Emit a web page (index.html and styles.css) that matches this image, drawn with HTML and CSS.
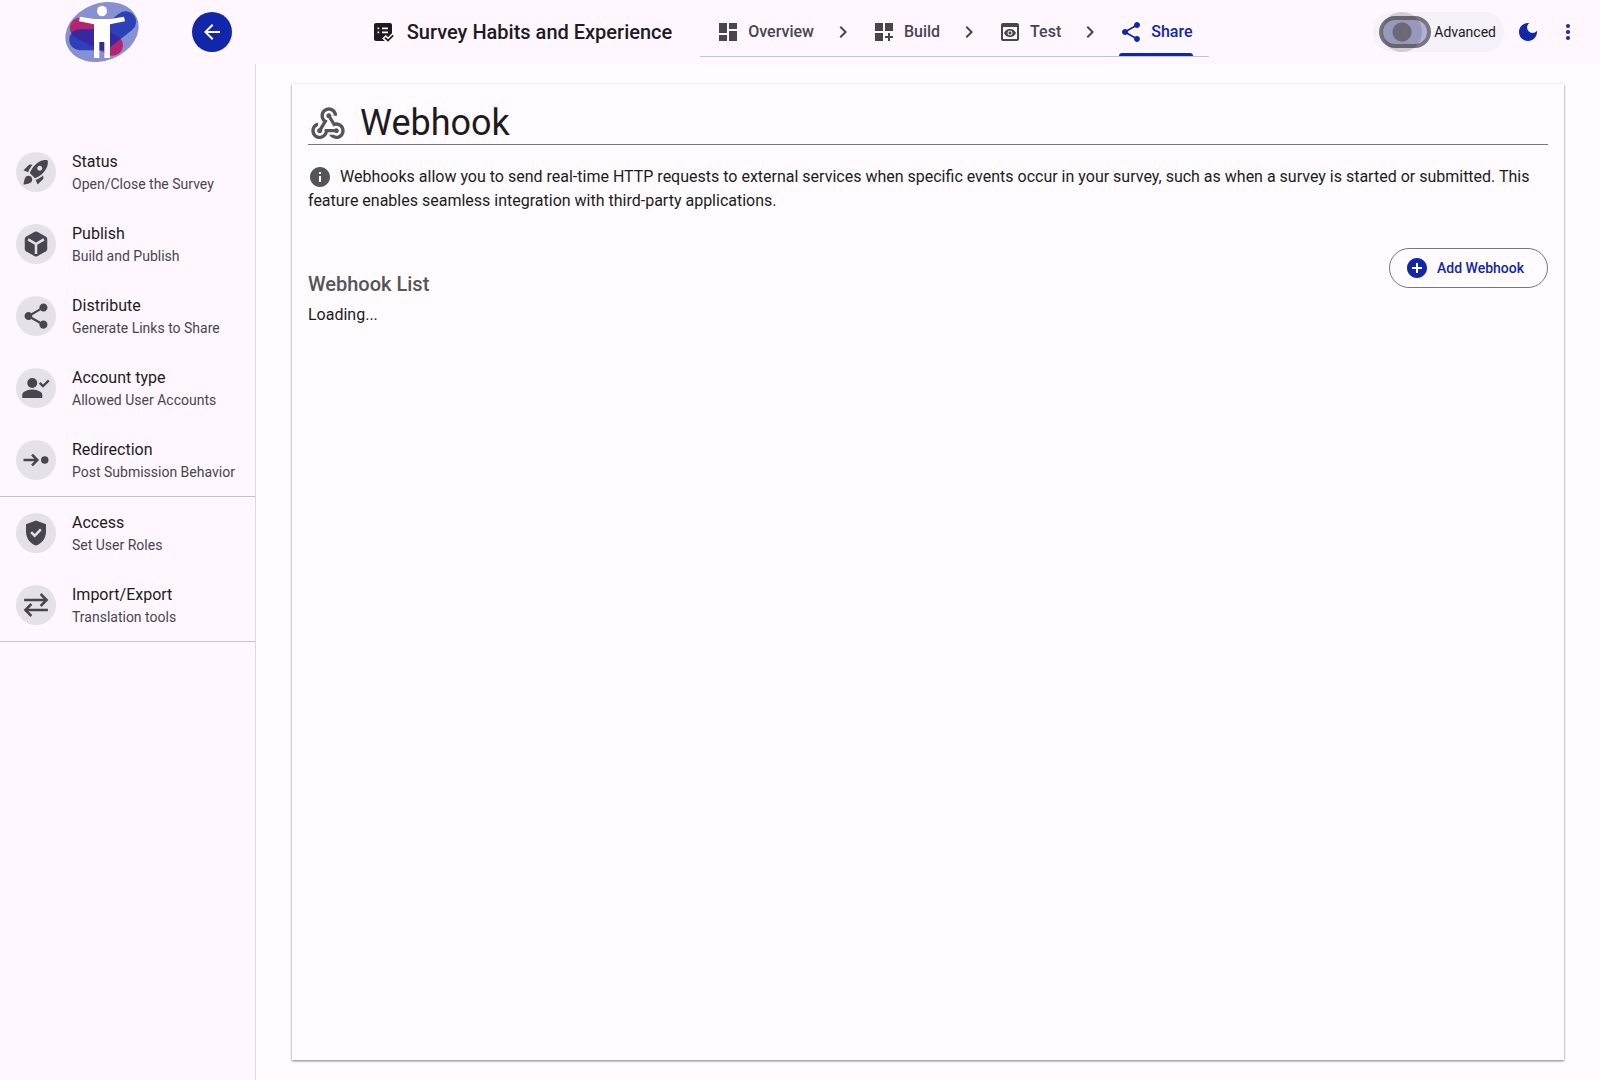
FILE: index.html
```html
<!DOCTYPE html>
<html lang="en">
<head>
    <meta charset="UTF-8">
    <meta name="viewport" content="width=device-width, initial-scale=1.0">
    <link rel="stylesheet" href="styles.css">
    <title>Webhook</title>
</head>
<body>
    <header class="topbar">
        <div class="brand">
            <svg class="logo" viewBox="42 0 228 192" aria-hidden="true">
                <ellipse cx="156" cy="96" rx="113" ry="86" fill="#8890d4" transform="rotate(-21 156 96)"/>
                <path d="M90 84 188 136" stroke="#b5246c" stroke-width="62" stroke-linecap="round"/>
                <path d="M89 119H158L227 65" fill="none" stroke="#1229b0" stroke-opacity=".78" stroke-width="63" stroke-linecap="round" stroke-linejoin="round"/>
                <ellipse cx="156" cy="33" rx="15" ry="16" fill="#fff"/>
                <path d="M90 50 133 57H180L222 50 225 64 180 73V174H163V126H148V174H132V73L87 64z" fill="#fff"/>
            </svg>
            <button class="back" aria-label="Back">
                <svg class="icon" viewBox="0 0 24 24"><path d="M20 11H7.83l5.59-5.59L12 4l-8 8 8 8 1.41-1.41L7.83 13H20v-2z"/></svg>
            </button>
        </div>

        <div class="survey">
            <svg class="icon" viewBox="0 0 24 24" aria-hidden="true">
                <path d="M5 3h14c1.1 0 2 .9 2 2v8.200l-4 4-2.300-2.200-3.500 3.400 2.600 2.600H5c-1.100 0-2-.9-2-2V5c0-1.100.9-2 2-2zm1.500 4.500v1.700h1.700V7.500zm4.500 0v1.700h6V7.500zm-4.500 4v1.700h1.700v-1.700zm4.500 0v1.700h6v-1.700z"/>
                <path d="M14 17.600l3 3 5.200-5.300" fill="none" stroke="currentColor" stroke-width="1.700"/>
            </svg>
            <h1 class="survey-name">Survey Habits and Experience</h1>
            <nav class="tabs">
                <a class="tab" href="#overview">
                    <svg class="icon" viewBox="0 0 24 24"><path d="M3 13h8V3H3v10zm0 8h8v-6H3v6zm10 0h8V11h-8v10zm0-18v6h8V3h-8z"/></svg>
                    Overview
                </a>
                <svg class="icon" viewBox="0 0 24 24"><path d="M10 6 8.590 7.410 13.170 12l-4.580 4.590L10 18l6-6z"/></svg>
                <a class="tab" href="#build">
                    <svg class="icon" viewBox="0 0 24 24"><path d="M3 3h8v8H3zm10 0h8v8h-8zM3 13h8v8H3zm15 0h-2v3h-3v2h3v3h2v-3h3v-2h-3z"/></svg>
                    Build
                </a>
                <svg class="icon" viewBox="0 0 24 24"><path d="M10 6 8.590 7.410 13.170 12l-4.580 4.590L10 18l6-6z"/></svg>
                <a class="tab" href="#test">
                    <svg class="icon" viewBox="0 0 24 24"><path d="M19 3H5c-1.110 0-2 .9-2 2v14c0 1.100.89 2 2 2h14c1.100 0 2-.9 2-2V5c0-1.100-.89-2-2-2zm0 16H5V7h14v12zm-5.500-6c0 .83-.67 1.500-1.500 1.500s-1.500-.67-1.500-1.500.67-1.500 1.500-1.500 1.500.67 1.500 1.500zM12 9c-2.730 0-5.060 1.660-6 4 .94 2.340 3.270 4 6 4s5.060-1.660 6-4c-.94-2.340-3.270-4-6-4zm0 6.500c-1.380 0-2.500-1.120-2.500-2.500s1.120-2.500 2.500-2.500 2.500 1.120 2.500 2.500-1.120 2.500-2.500 2.500z"/></svg>
                    Test
                </a>
                <svg class="icon" viewBox="0 0 24 24"><path d="M10 6 8.590 7.410 13.170 12l-4.580 4.590L10 18l6-6z"/></svg>
                <a class="tab active" href="#share" aria-current="page">
                    <svg class="icon" viewBox="0 0 24 24"><path d="M18 16.080c-.76 0-1.440.3-1.960.77L8.910 12.700c.05-.23.09-.46.09-.7s-.04-.47-.09-.7l7.050-4.110c.54.5 1.250.81 2.040.81 1.660 0 3-1.340 3-3s-1.340-3-3-3-3 1.340-3 3c0 .24.04.47.09.7L8.040 9.810C7.500 9.310 6.790 9 6 9c-1.660 0-3 1.340-3 3s1.340 3 3 3c.79 0 1.500-.31 2.040-.81l7.120 4.160c-.05.21-.08.43-.08.65 0 1.610 1.310 2.920 2.920 2.920s2.920-1.310 2.920-2.920-1.310-2.920-2.920-2.920z"/></svg>
                    Share
                </a>
            </nav>
        </div>

        <div class="tools">
            <label class="advanced">
                <span class="switch"><input type="checkbox" class="switch-input"></span>
                Advanced
            </label>
            <button class="icon-btn" aria-label="Dark mode">
                <svg class="icon" viewBox="0 0 24 24"><path d="M12 3c-4.970 0-9 4.030-9 9s4.030 9 9 9 9-4.030 9-9c0-.46-.04-.92-.1-1.360-.98 1.370-2.580 2.260-4.400 2.260-2.980 0-5.400-2.420-5.400-5.400 0-1.810.89-3.420 2.260-4.400C12.920 3.040 12.460 3 12 3z"/></svg>
            </button>
            <button class="icon-btn" aria-label="More">
                <svg class="icon" viewBox="0 0 24 24"><circle cx="12" cy="6" r="2"/><circle cx="12" cy="12" r="2"/><circle cx="12" cy="18" r="2"/></svg>
            </button>
        </div>
    </header>

    <div class="layout">
        <nav class="sidebar">
            <a class="item" href="#status">
                <span class="avatar"><svg viewBox="0 0 24 24"><path d="M9.190 6.350c-2.040 2.290-3.440 5.580-3.570 5.890L2 10.690l4.050-4.050c.47-.47 1.150-.68 1.810-.55l1.330.26zM11.170 17s3.740-1.550 5.890-3.700c5.400-5.400 4.500-9.620 4.210-10.570-.95-.3-5.170-1.190-10.570 4.210C8.550 9.090 7 12.830 7 12.830L11.170 17zm6.480-2.190c-2.290 2.040-5.580 3.440-5.890 3.570L13.310 22l4.050-4.050c.47-.47.68-1.150.55-1.810l-.26-1.330zM9 18c0 .83-.34 1.580-.88 2.120C6.940 21.300 2 22 2 22s.7-4.940 1.880-6.120C4.420 15.340 5.170 15 6 15c1.660 0 3 1.340 3 3zm4-9c0-1.100.9-2 2-2s2 .9 2 2-.9 2-2 2-2-.9-2-2z"/></svg></span>
                <span class="item-text"><span class="item-title">Status</span><span class="item-sub">Open/Close the Survey</span></span>
            </a>
            <a class="item" href="#publish">
                <span class="avatar"><svg viewBox="0 0 24 24"><path d="M11 2.200q1-.55 2 0l7 4q1 .6 1 1.800v8q0 1.200-1 1.800l-7 4q-1 .55-2 0l-7-4q-1-.6-1-1.800V8q0-1.200 1-1.800z"/><path class="cut" d="M5.700 8.300 12 12l6.300-3.700M12 12v8"/></svg></span>
                <span class="item-text"><span class="item-title">Publish</span><span class="item-sub">Build and Publish</span></span>
            </a>
            <a class="item" href="#distribute">
                <span class="avatar"><svg viewBox="0 0 24 24"><path d="M18 15.500c-.9 0-1.700.4-2.300 1L8.910 12.700c.05-.23.09-.46.09-.7s-.04-.47-.09-.7l6.700-3.900c.6.500 1.400 1 2.390 1 1.900 0 3.200-1.500 3.200-3.200s-1.400-3.300-3.200-3.300-3.300 1.500-3.300 3.300c0 .3.100.500.100.700L8.200 9.700C7.600 9.100 6.900 8.800 6 8.800c-1.800 0-3.200 1.400-3.200 3.200s1.400 3.200 3.200 3.200c.9 0 1.600-.3 2.200-.9l6.600 3.900c-.1.2-.1.500-.1.700 0 1.800 1.500 3.200 3.300 3.200s3.200-1.500 3.200-3.300-1.400-3.300-3.200-3.300z"/></svg></span>
                <span class="item-text"><span class="item-title">Distribute</span><span class="item-sub">Generate Links to Share</span></span>
            </a>
            <a class="item" href="#account">
                <span class="avatar"><svg viewBox="0 0 24 24"><circle cx="9" cy="8" r="4"/><path d="M1 20v-2.800q0-1.600 1.500-2.300Q5.500 13.200 9 13.200t6.500 1.700Q17 15.600 17 17.200V20zM17.600 11.800 14.300 8.500l1.300-1.300 2 2 4-4L22.900 6.500z"/></svg></span>
                <span class="item-text"><span class="item-title">Account type</span><span class="item-sub">Allowed User Accounts</span></span>
            </a>
            <a class="item" href="#redirection">
                <span class="avatar"><svg viewBox="0 0 24 24"><circle cx="19" cy="12" r="3"/><path d="M9.500 17 8.100 15.600 10.700 13H2v-2h8.700L8.100 8.400 9.500 7l5 5z"/></svg></span>
                <span class="item-text"><span class="item-title">Redirection</span><span class="item-sub">Post Submission Behavior</span></span>
            </a>
            <hr class="divider">
            <a class="item" href="#access">
                <span class="avatar"><svg viewBox="0 0 24 24"><path d="M12 2 4 5v6.090c0 5.050 3.410 9.760 8 10.910 4.590-1.150 8-5.860 8-10.910V5l-8-3zm-1.060 13.540L7.400 12l1.410-1.410 2.120 2.120 4.240-4.240 1.410 1.410-5.640 5.660z"/></svg></span>
                <span class="item-text"><span class="item-title">Access</span><span class="item-sub">Set User Roles</span></span>
            </a>
            <a class="item" href="#transfer">
                <span class="avatar"><svg viewBox="0 0 24 24"><path fill="none" stroke="currentColor" stroke-width="2" d="M2.500 8h17.500M15.700 3.200 20.500 8l-4.800 4.800M21.500 16H4M8.300 11.200 3.500 16l4.800 4.800"/></svg></span>
                <span class="item-text"><span class="item-title">Import/Export</span><span class="item-sub">Translation tools</span></span>
            </a>
            <hr class="divider">
        </nav>

        <main class="card">
            <div class="page-title">
                <svg class="webhook-icon" viewBox="0 0 24 24" aria-hidden="true"><path d="M10 15h5.880c.27-.31.67-.5 1.120-.5.83 0 1.500.67 1.500 1.500s-.67 1.500-1.500 1.500c-.44 0-.84-.19-1.120-.5H11.900c-.46 2.280-2.480 4-4.900 4-2.760 0-5-2.240-5-5 0-2.420 1.720-4.440 4-4.900v2.070c-1.160.41-2 1.530-2 2.830 0 1.650 1.350 3 3 3s3-1.350 3-3v-1zm2.500-11c1.650 0 3 1.350 3 3h2c0-2.760-2.240-5-5-5s-5 2.240-5 5c0 1.430.6 2.710 1.550 3.620l-2.350 3.900c-.68.14-1.200.75-1.200 1.480 0 .83.67 1.500 1.500 1.500s1.500-.67 1.500-1.500c0-.16-.02-.31-.07-.45l3.380-5.630C10.490 9.610 9.500 8.420 9.500 7c0-1.650 1.350-3 3-3zm4.500 9c-.64 0-1.230.2-1.720.54l-3.050-5.070C11.530 8.350 11 7.740 11 7c0-.83.67-1.500 1.500-1.500S14 6.170 14 7c0 .15-.02.29-.06.43l2.190 3.650c.28-.05.57-.08.87-.08 2.760 0 5 2.240 5 5s-2.240 5-5 5c-1.850 0-3.470-1.010-4.330-2.500h2.670c.48.32 1.050.5 1.660.5 1.650 0 3-1.350 3-3s-1.350-3-3-3z"/></svg>
                <h2 class="page-name">Webhook</h2>
            </div>
            <p class="intro">
                <svg class="icon info-icon" viewBox="0 0 24 24" aria-hidden="true"><path d="M12 2C6.480 2 2 6.480 2 12s4.480 10 10 10 10-4.480 10-10S17.520 2 12 2zm1 15h-2v-6h2v6zm0-8h-2V7h2v2z"/></svg>
                Webhooks allow you to send real-time HTTP requests to external services when specific events occur in your survey, such as when a survey is started or submitted. This feature enables seamless integration with third-party applications.
            </p>
            <div class="list-head">
                <h3 class="list-title">Webhook List</h3>
                <button class="add-btn">
                    <svg class="icon" viewBox="0 0 24 24"><path d="M12 2C6.480 2 2 6.480 2 12s4.480 10 10 10 10-4.480 10-10S17.520 2 12 2zm5 11h-4v4h-2v-4H7v-2h4V7h2v4h4v2z"/></svg>
                    Add Webhook
                </button>
            </div>
            <p class="loading">Loading...</p>
        </main>
    </div>
</body>
</html>
```

FILE: styles.css
```css
* {
    box-sizing: border-box;
}
body {
    margin: 0;
    min-height: 100vh;
    display: flex;
    flex-direction: column;
    background-color: #fffbff;
    color: #1d1b20;
    font-family: Roboto, "Liberation Sans", sans-serif;
    font-size: 16px;
    line-height: 24px;
}
h1, h2, h3, p {
    margin: 0;
}
a {
    color: inherit;
    text-decoration: none;
}
button {
    font: inherit;
    cursor: pointer;
}
svg {
    fill: currentColor;
    flex-shrink: 0;
}
.icon {
    width: 24px;
    height: 24px;
}

/* top bar */
.topbar {
    display: flex;
    justify-content: space-between;
    align-items: center;
    height: 64px;
    padding: 0 12px 0 64px;
    background-color: #fef7ff;
}
.brand {
    display: flex;
    align-items: center;
    gap: 52px;
}
.logo {
    width: 76px;
    height: 64px;
}
.back {
    display: flex;
    align-items: center;
    justify-content: center;
    width: 40px;
    height: 40px;
    padding: 0;
    border: none;
    border-radius: 50%;
    background-color: #1226aa;
    color: #fff;
}
.survey {
    display: flex;
    align-items: center;
    margin-right: 26px;
}
.survey-name {
    margin: 0 28px 0 12px;
    font-size: 20px;
    font-weight: 500;
    white-space: nowrap;
}
.tabs {
    display: flex;
    align-items: center;
    height: 50px;
    padding: 0 16px;
    border-bottom: 1px solid #bec8ca;
    color: #49454e;
    gap: 17px;
}
.tab {
    display: flex;
    align-items: center;
    gap: 8px;
    height: 49px;
    border-top: 3px solid transparent;
    border-bottom: 3px solid transparent;
    font-weight: 500;
}
.tab.active {
    position: relative;
    color: #1226aa;
}
.tab.active::after {
    content: "";
    position: absolute;
    left: 0;
    right: 0;
    bottom: -3px;
    height: 3px;
    border-radius: 3px 3px 0 0;
    background-color: #1226aa;
}
.tools {
    display: flex;
    align-items: center;
}
.advanced {
    display: flex;
    align-items: center;
    gap: 3px;
    height: 40px;
    margin-right: 4px;
    padding: 0 8px 0 6px;
    border-radius: 20px;
    background-color: #f5f1f8;
    font-size: 14px;
    cursor: pointer;
}
.switch {
    position: relative;
    display: flex;
}
.switch::before {
    content: "";
    position: absolute;
    top: -4px;
    left: 3px;
    width: 40px;
    height: 40px;
    border-radius: 50%;
    background-color: rgba(29, 27, 32, .17);
    pointer-events: none;
}
.switch-input {
    appearance: none;
    width: 52px;
    height: 32px;
    margin: 0;
    border: 4px solid #79747e;
    border-radius: 16px;
    background: radial-gradient(circle at 19px 12px, #7c7888 9px, transparent 10px) #b0b1dd;
    background-origin: padding-box;
    cursor: pointer;
}
.icon-btn {
    display: flex;
    padding: 8px;
    border: none;
    background: none;
    color: #1226aa;
}

/* left menu */
.layout {
    display: flex;
    flex: 1;
}
.sidebar {
    flex: 0 0 256px;
    padding-top: 72px;
    border-right: 1px solid #dcd6df;
    background-color: #fef7ff;
}
.item {
    display: flex;
    align-items: center;
    gap: 16px;
    height: 72px;
    padding: 0 16px;
}
.avatar {
    display: flex;
    align-items: center;
    justify-content: center;
    width: 40px;
    height: 40px;
    border-radius: 50%;
    background-color: #e6e0e9;
    color: #49454e;
}
.avatar svg {
    width: 30px;
    height: 30px;
}
.cut {
    fill: none;
    stroke: #e6e0e9;
    stroke-width: 2;
}
.item-text {
    display: flex;
    flex-direction: column;
    white-space: nowrap;
}
.item-sub {
    color: #49454e;
    font-size: 14px;
    line-height: 20px;
}
.divider {
    height: 1px;
    margin: 0;
    border: none;
    background-color: #bec8ca;
}

/* content */
.card {
    flex: 1;
    margin: 20px 36px;
    padding: 18px 16px 16px;
    background-color: #fffbff;
    box-shadow: 0 1px 2px rgba(0, 0, 0, .35), 0 1px 3px rgba(0, 0, 0, .2);
}
.page-title {
    display: flex;
    align-items: flex-end;
    gap: 12px;
    border-bottom: 1px solid #79747e;
}
.webhook-icon {
    width: 40px;
    height: 40px;
    color: #555;
}
.page-name {
    font-size: 36px;
    font-weight: 400;
    line-height: 42px;
}
.intro {
    margin-top: 20px;
}
.info-icon {
    margin-right: 4px;
    vertical-align: top;
    color: #555;
}
.list-head {
    display: flex;
    justify-content: space-between;
    align-items: flex-start;
    margin-top: 35px;
}
.list-title {
    padding-top: 22px;
    color: #555;
    font-size: 20px;
    font-weight: 500;
    line-height: 28px;
}
.add-btn {
    display: flex;
    align-items: center;
    gap: 8px;
    height: 40px;
    padding: 0 23px 0 15px;
    border: 1px solid #79747e;
    border-radius: 20px;
    background: none;
    color: #1226aa;
    font-size: 14px;
    font-weight: 500;
}
.loading {
    margin-top: 5px;
}
```
